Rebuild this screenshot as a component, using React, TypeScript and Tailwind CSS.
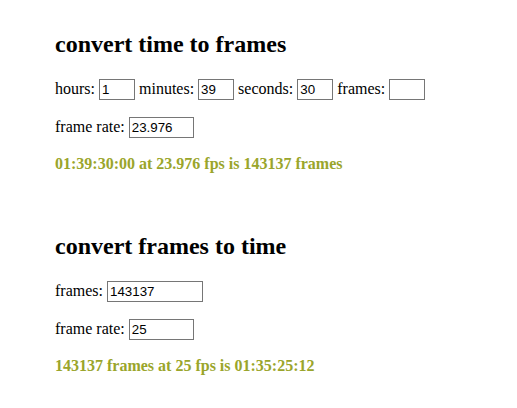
import React from "react";

const inputCls =
  "inline-block align-baseline h-[21px] border border-[#767676] bg-white px-[2px] text-[13.333px] leading-[15px] text-black [font-family:'Liberation_Sans',Arial,sans-serif] outline-none";

function Section({
  title,
  rows,
  result,
  className,
}: {
  title: string;
  rows: React.ReactNode[];
  result: string;
  className?: string;
}) {
  return (
    <section className={className}>
      <h2 className="text-[24px] font-bold leading-[28px]">{title}</h2>
      <p className="mt-[21px] leading-[16px]">{rows[0]}</p>
      <p className="mt-[17px] leading-[16px]">{rows[1]}</p>
      <p className="mt-[16px] text-[16px] font-bold leading-[20px] text-[#9aa52b]">{result}</p>
    </section>
  );
}

export default function App() {
  return (
    <div className="min-h-[408px] w-[517px] bg-white pl-[55px] pt-[30px] text-[16px] text-black [font-family:'Liberation_Serif','Times_New_Roman',serif]">
      <Section
        title="convert time to frames"
        rows={[
          <>
            hours: <input className={`${inputCls} w-[36px]`} defaultValue="1" /> minutes:{" "}
            <input className={`${inputCls} w-[36px]`} defaultValue="39" /> seconds:{" "}
            <input className={`${inputCls} w-[36px]`} defaultValue="30" /> frames:{" "}
            <input className={`${inputCls} w-[36px]`} defaultValue="" />
          </>,
          <>
            frame rate: <input className={`${inputCls} w-[65px]`} defaultValue="23.976" />
          </>,
        ]}
        result="01:39:30:00 at 23.976 fps is 143137 frames"
      />
      <Section
        className="mt-[58px]"
        title="convert frames to time"
        rows={[
          <>
            frames: <input className={`${inputCls} w-[96px]`} defaultValue="143137" />
          </>,
          <>
            frame rate: <input className={`${inputCls} w-[65px]`} defaultValue="25" />
          </>,
        ]}
        result="143137 frames at 25 fps is 01:35:25:12"
      />
    </div>
  );
}
